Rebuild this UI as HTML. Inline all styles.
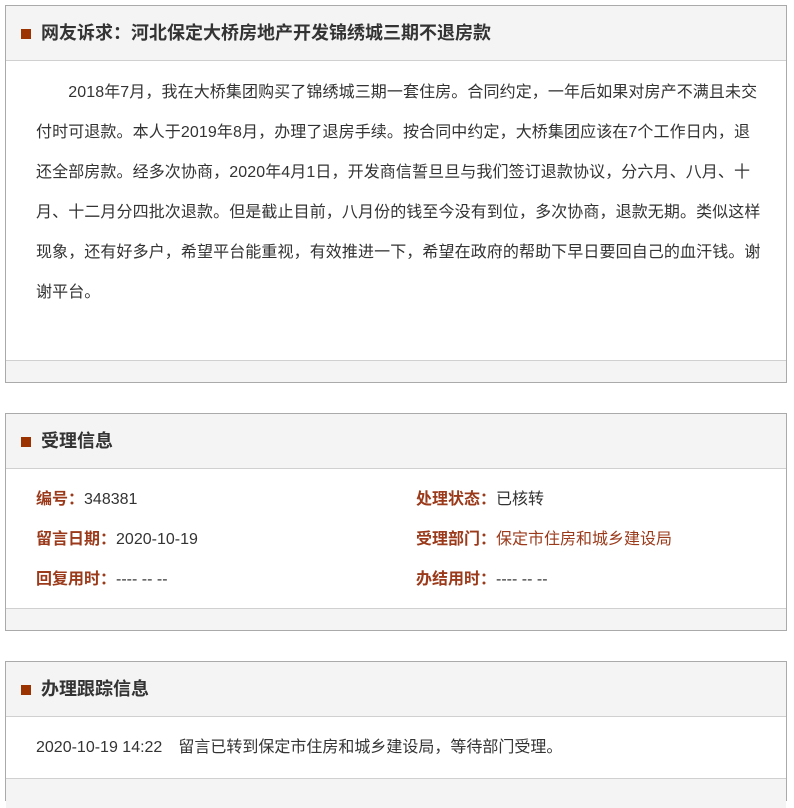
<!DOCTYPE html>
<html><head><meta charset="utf-8"><style>
*{margin:0;padding:0;box-sizing:border-box}
body{width:794px;height:787px;overflow:hidden;background:#fff;font-family:"Liberation Sans","Noto Sans CJK SC",sans-serif;font-size:16px;color:#333;position:relative}
.p{position:absolute;left:5px;width:782px;border:1px solid #aaa;background:#fff}
.h{position:absolute;left:0;top:0;width:100%;height:55px;background:#f4f4f4;border-bottom:1px solid #d0d0d0}
.h i{position:absolute;left:15px;top:23px;width:10px;height:10px;background:#9b3300}
.h b{position:absolute;left:35px;top:16px;font-size:18px;line-height:22px;color:#333}
.f{position:absolute;left:0;bottom:0;width:100%;background:#f4f4f4;border-top:1px solid #d0d0d0}
.t{position:absolute;white-space:nowrap;line-height:20px}
.l{color:#9b3a1a;font-weight:bold}
</style></head><body>
<div class="p" style="top:5px;height:378px">
 <div class="h"><i></i><b>网友诉求：河北保定大桥房地产开发锦绣城三期不退房款</b></div>
 <div class="t" style="left:30px;top:67px;line-height:40px;letter-spacing:0.1px">
 &emsp;&emsp;2018年7月，我在大桥集团购买了锦绣城三期一套住房。合同约定，一年后如果对房产不满且未交<br>付时可退款。本人于2019年8月，办理了退房手续。按合同中约定，大桥集团应该在7个工作日内，退<br>还全部房款。经多次协商，2020年4月1日，开发商信誓旦旦与我们签订退款协议，分六月、八月、十<br>月、十二月分四批次退款。但是截止目前，八月份的钱至今没有到位，多次协商，退款无期。类似这样<br>现象，还有好多户，希望平台能重视，有效推进一下，希望在政府的帮助下早日要回自己的血汗钱。谢<br>谢平台。</div>
 <div class="f" style="height:22px"></div>
</div>
<div class="p" style="top:413px;height:218px">
 <div class="h"><i></i><b>受理信息</b></div>
 <div class="t" style="left:30px;top:76px"><span class="l">编号：</span>348381</div>
 <div class="t" style="left:30px;top:116px"><span class="l">留言日期：</span>2020-10-19</div>
 <div class="t" style="left:30px;top:156px"><span class="l">回复用时：</span>---- -- --</div>
 <div class="t" style="left:410px;top:76px"><span class="l">处理状态：</span>已核转</div>
 <div class="t" style="left:410px;top:116px"><span class="l">受理部门：</span><span style="color:#9b3a1a">保定市住房和城乡建设局</span></div>
 <div class="t" style="left:410px;top:156px"><span class="l">办结用时：</span>---- -- --</div>
 <div class="f" style="height:22px"></div>
</div>
<div class="p" style="top:661px;height:140px">
 <div class="h"><i></i><b>办理跟踪信息</b></div>
 <div class="t" style="left:30px;top:76px">2020-10-19 14:22&emsp;留言已转到保定市住房和城乡建设局，等待部门受理。</div>
 <div style="position:absolute;left:0;top:116px;width:100%;height:30px;background:#f4f4f4;border-top:1px solid #d0d0d0"></div>
</div>
</body></html>
